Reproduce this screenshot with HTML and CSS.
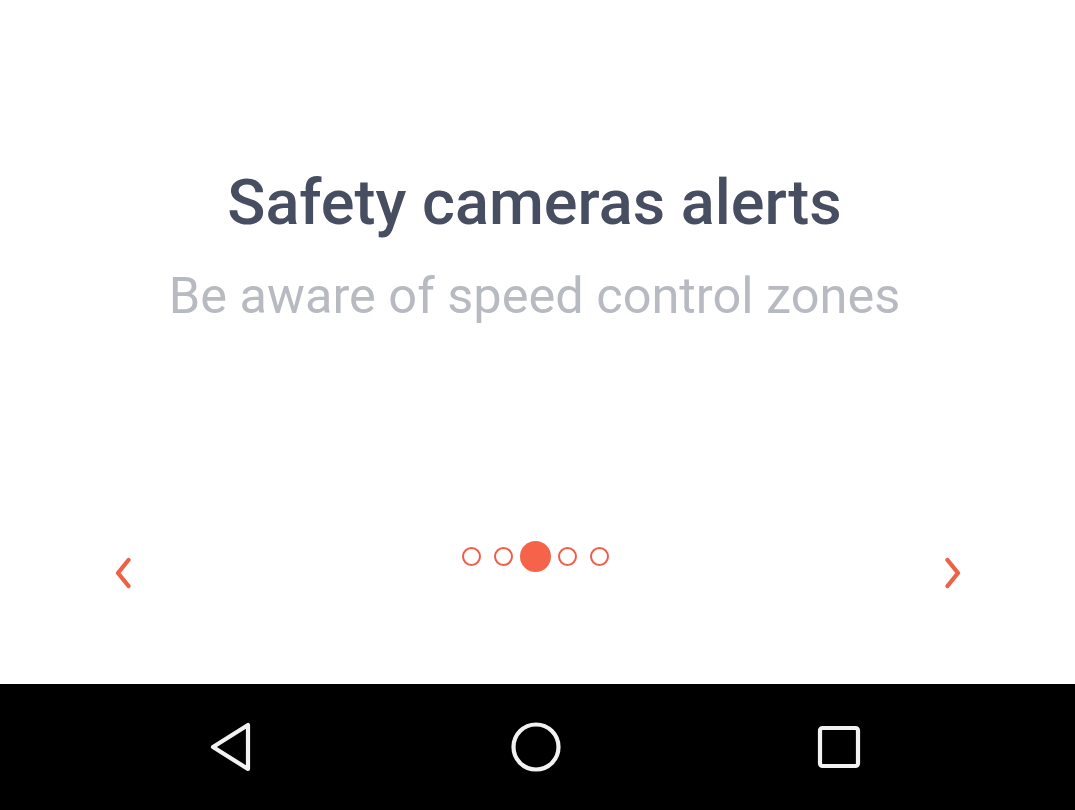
FILE: index.html
```html
<!DOCTYPE html>
<html>
<head>
<meta charset="utf-8">
<link rel="stylesheet" href="styles.css">
</head>
<body>
<div class="screen">
  <main class="content">
    <div class="texts">
      <h1 class="title">Safety cameras alerts</h1>
      <p class="subtitle">Be aware of speed control zones</p>
    </div>
    <div class="pager">
      <button class="arrow" aria-label="Previous">
        <svg width="20" height="32" viewBox="0 0 20 32"><path d="M15.5 3 L5 16 L15.5 29" fill="none" stroke="#ef6145" stroke-width="4.3" stroke-linecap="round" stroke-linejoin="round"/></svg>
      </button>
      <div class="dots">
        <span class="dot"></span>
        <span class="dot"></span>
        <span class="dot active"></span>
        <span class="dot"></span>
        <span class="dot"></span>
      </div>
      <button class="arrow" aria-label="Next">
        <svg width="20" height="32" viewBox="0 0 20 32"><path d="M4.5 3 L15 16 L4.5 29" fill="none" stroke="#ef6145" stroke-width="4.3" stroke-linecap="round" stroke-linejoin="round"/></svg>
      </button>
    </div>
  </main>
  <nav class="navbar">
    <svg class="nav-icon" width="48" height="52" viewBox="0 0 48 52"><path d="M40 4 L40 48 L5 26 Z" fill="none" stroke="#f2f2f2" stroke-width="4.2" stroke-linejoin="round"/></svg>
    <svg class="nav-icon" width="52" height="52" viewBox="0 0 52 52"><circle cx="26" cy="26" r="22.5" fill="none" stroke="#f2f2f2" stroke-width="4.2"/></svg>
    <svg class="nav-icon" width="48" height="48" viewBox="0 0 48 48"><rect x="5" y="5" width="38" height="38" rx="2.5" fill="none" stroke="#f2f2f2" stroke-width="4.2"/></svg>
  </nav>
</div>
</body>
</html>
```
FILE: styles.css
```css
* { box-sizing: border-box; }
html, body { margin: 0; padding: 0; }
body { font-family: Roboto, "Liberation Sans", sans-serif; background: #fff; }
.screen { width: 1075px; height: 810px; display: flex; flex-direction: column; }
.content { height: 684px; background: #fff; display: flex; flex-direction: column; }
.texts { padding: 163px 6px 0 0; text-align: center; }
.title { margin: 0; font-weight: 500; font-size: 63px; line-height: 80px; color: #474e62; letter-spacing: 0; }
.subtitle { margin: 21px 0 0; font-weight: 400; font-size: 50.5px; line-height: 64px; color: #b7bac0; }
.pager { margin-top: 213px; display: flex; justify-content: space-between; align-items: flex-start; padding: 0 112px 0 113px; }
.arrow { background: none; border: 0; padding: 0; width: 20px; height: 32px; margin-top: 16px; display: flex; }
.dots { display: flex; align-items: center; gap: 13px; height: 30px; margin-right: 6px; }
.dot { width: 19px; height: 19px; border-radius: 50%; border: 2.6px solid #ef5f48; }
.dot.active { width: 31px; height: 31px; border: 0; background: #f4634a; margin: 0 -6px; }
.navbar { flex: 1; background: #000; display: flex; justify-content: space-between; align-items: center; padding: 0 212px 0 208px; }
.nav-icon { display: block; }
```
